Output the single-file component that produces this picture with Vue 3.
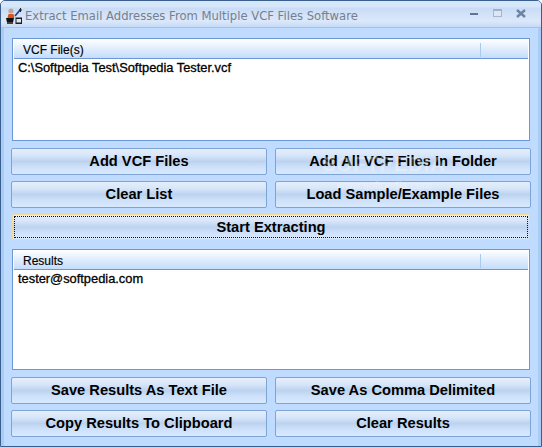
<script setup>
const topFiles = ['C:\\Softpedia Test\\Softpedia Tester.vcf']
const topButtons = ['Add VCF Files', 'Add All VCF Files In Folder', 'Clear List', 'Load Sample/Example Files']
const results = ['tester@softpedia.com']
const bottomButtons = ['Save Results As Text File', 'Save As Comma Delimited', 'Copy Results To Clipboard', 'Clear Results']
</script>

<template>
  <div class="window">
    <header class="titlebar">
      <svg class="app-icon" width="18" height="18" viewBox="0 0 18 18">
        <circle cx="6" cy="4" r="2.6" fill="#b9a79c" />
        <path d="M2.5 11 L3.5 7 H8.5 L9.5 11 Z" fill="#d9541c" />
        <path d="M1 11 H9 L8 15.5 H2 Z" fill="#111" />
        <rect x="2" y="15" width="6" height="2" fill="#444" />
        <path d="M10 9 L15.5 2.5" stroke="#1d3f9c" stroke-width="1.7" />
        <path d="M14 3 H17 M15.5 1 V5" stroke="#222" stroke-width="1" />
        <rect x="10.5" y="10.5" width="6.5" height="6.5" fill="#1c1c1c" />
        <rect x="11.5" y="12" width="4.5" height="3.5" fill="#dfe6ee" />
      </svg>
      <span class="title">Extract Email Addresses From Multiple VCF Files Software</span>
      <div class="controls">
        <svg width="9" height="4" viewBox="0 0 9 4" class="min"><rect y="1" width="8" height="2" fill="#5e7595" /></svg>
        <svg width="9" height="9" viewBox="0 0 9 9" class="max"><rect x="0.5" y="0.5" width="8" height="7" fill="#dbe7f8" stroke="#a9b6c8" /><rect x="0" y="0" width="9" height="2" fill="#a3b0c4" /></svg>
        <svg width="10" height="9" viewBox="0 0 10 9" class="close"><path d="M1 1 L9 8 M9 1 L1 8" stroke="#6d83a3" stroke-width="2.4" /></svg>
      </div>
    </header>

    <main class="client">
      <section class="list list-top">
        <div class="list-head"><span class="col-main">VCF File(s)</span><span class="col-rest"></span></div>
        <div class="list-body"><div v-for="f in topFiles" :key="f">{{ f }}</div></div>
      </section>

      <div class="button-grid grid-top">
        <button v-for="b in topButtons" :key="b" class="btn"><span class="lift">{{ b }}</span></button>
        <div class="watermark"><span class="wm-big">SOFTPEDIA</span><span class="wm-small">www.softpedia.com</span></div>
      </div>

      <button class="btn start"><span>Start Extracting</span></button>

      <section class="list list-bottom">
        <div class="list-head"><span class="col-main">Results</span><span class="col-rest"></span></div>
        <div class="list-body"><div v-for="r in results" :key="r">{{ r }}</div></div>
      </section>

      <div class="button-grid grid-bottom">
        <button v-for="b in bottomButtons" :key="b" class="btn"><span class="lift">{{ b }}</span></button>
      </div>
    </main>
  </div>
</template>

<style scoped>
.window {
  width: 542px;
  height: 447px;
  box-sizing: border-box;
  display: flex;
  flex-direction: column;
  background: #bfdbff;
  border: 1px solid #3a5f8f;
  border-radius: 5px 5px 0 0;
  overflow: hidden;
  font-family: "Liberation Sans", Arial, sans-serif;
  color: #000;
}
.titlebar {
  height: 27px;
  flex: none;
  box-sizing: border-box;
  display: flex;
  align-items: center;
  padding: 4px 7px 0 4px;
  background: linear-gradient(#d6e6fb 0, #d6e6fb 6px, #c9dcf6 7px, #dbe8fa 20px, #c5daf6 26px);
  border-bottom: 1px solid #9fc5ef;
}
.app-icon { flex: none; margin-top: -1px; }
.title {
  margin-left: 2px;
  font-family: "DejaVu Sans", sans-serif;
  font-size: 11.6px;
  color: #767f8f;
  white-space: nowrap;
}
.controls {
  margin-left: auto;
  display: flex;
  align-items: center;
  gap: 14px;
  padding-right: 8px;
  margin-top: -5px;
}
.client {
  flex: 1;
  display: flex;
  flex-direction: column;
  padding: 10px 8px 9px;
  border-left: 3px solid #a9ccf5;
  border-right: 3px solid #a9ccf5;
  box-sizing: border-box;
}
.list {
  box-sizing: border-box;
  background: #fff;
  border: 1px solid #6b97d6;
  display: flex;
  flex-direction: column;
}
.list-top { height: 103px; }
.list-bottom { height: 121px; margin-top: 9px; }
.list-head {
  flex: none;
  height: 20px;
  box-sizing: border-box;
  margin: 0 1px;
  padding-top: 2px;
  display: flex;
  align-items: center;
  background: linear-gradient(#fff, #c4dcfb);
  border-bottom: 1px solid #6b97d6;
  font-size: 12px;
  -webkit-text-stroke: 0.15px #000;
}
.col-main {
  width: 467px;
  box-sizing: border-box;
  padding-left: 9px;
  height: 14px;
  line-height: 14px;
  border-right: 1px solid #a9c9ef;
}
.list-body {
  flex: 1;
  padding: 1px 0 0 5px;
  font-size: 12.85px;
  line-height: 15px;
  -webkit-text-stroke: 0.3px #000;
}
.button-grid {
  position: relative;
  display: grid;
  grid-template-columns: 256px 256px;
  grid-auto-rows: 27px;
  column-gap: 8px;
  row-gap: 6px;
  margin-left: -1px;
  width: 520px;
}
.grid-top { margin-top: 7px; }
.grid-bottom { margin-top: 7px; }
.btn {
  box-sizing: border-box;
  border: 1px solid #7fa3d3;
  border-radius: 2px;
  padding: 0;
  background: linear-gradient(#e4eefc 0, #d8e6fa 25%, #bcd3ef 50%, #cfe2fb 75%, #d8e9fe 100%);
  font-family: "Liberation Sans", Arial, sans-serif;
  font-weight: 700;
  font-size: 14.67px;
  color: #000;
}
.lift {
  display: block;
  margin-bottom: 2px;
}
.start {
  height: 26px;
  margin-top: 6px;
  border: 1px solid #f3d99a;
  display: flex;
  padding: 1px;
  flex: none;
}
.start span {
  flex: 1;
  line-height: 20px;
  border: 1px dotted #111;
}
.watermark {
  position: absolute;
  left: 278px;
  top: 6px;
  width: 190px;
  display: flex;
  flex-direction: column;
  align-items: center;
  color: rgba(255, 255, 255, 0.32);
  pointer-events: none;
  line-height: 1;
}
.wm-big { font-size: 20px; font-weight: 700; letter-spacing: 1px; }
.wm-small { font-size: 11px; margin-top: 6px; }
</style>
